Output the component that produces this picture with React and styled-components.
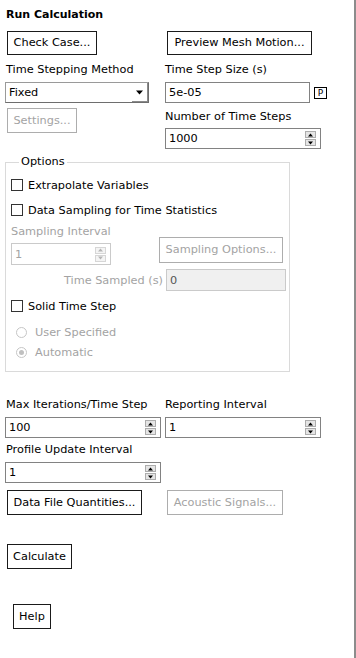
import React from 'react';
import styled, { createGlobalStyle } from 'styled-components';

const GlobalStyle = createGlobalStyle`
  html, body {
    margin: 0;
    padding: 0;
    background: #fff;
  }
  * {
    box-sizing: border-box;
  }
`;

const Panel = styled.div`
  width: 356px;
  height: 658px;
  border-right: 2px solid #8c8c8c;
  background: #fff;
  font-family: 'DejaVu Sans', Verdana, sans-serif;
  font-size: 11.3px;
  color: #000;
  display: flex;
  flex-direction: column;
  align-items: flex-start;
  overflow: hidden;
`;

const Title = styled.div`
  margin: 8px 0 0 6px;
  font-size: 11px;
  font-weight: bold;
  line-height: 14px;
`;

const Row = styled.div`
  display: grid;
  grid-template-columns: 165px 1fr;
  align-items: start;
  width: 100%;
  margin-top: ${({ $mt }) => $mt || 0}px;
`;

const Cell = styled.div`
  display: flex;
  flex-direction: column;
  align-items: flex-start;
`;

const Label = styled.div`
  line-height: 14px;
  white-space: nowrap;
  color: ${({ $disabled }) => ($disabled ? '#a3a3a3' : '#000')};
  margin-top: ${({ $mt }) => $mt || 0}px;
  margin-left: ${({ $ml }) => $ml || 0}px;
`;

const Button = styled.button`
  width: ${({ $w }) => $w}px;
  height: ${({ $h }) => $h || 25}px;
  margin-left: ${({ $ml }) => $ml || 0}px;
  margin-top: ${({ $mt }) => $mt || 0}px;
  padding: 0;
  background: #fff;
  border: 1px solid ${({ disabled }) => (disabled ? '#adadad' : '#1a1a1a')};
  color: ${({ disabled }) => (disabled ? '#a3a3a3' : '#000')};
  font: inherit;
  line-height: 14px;
  text-align: center;
  white-space: nowrap;
`;

const Select = styled.div`
  display: flex;
  align-items: stretch;
  width: ${({ $w }) => $w}px;
  height: 21px;
  margin-left: ${({ $ml }) => $ml || 0}px;
  border: 1px solid #9a9a9a;
  border-right-color: #6e6e6e;
  border-bottom-color: #6e6e6e;
  background: #fff;
`;

const SelectValue = styled.span`
  flex: 1;
  padding-left: 3px;
  line-height: 19px;
`;

const SelectArrow = styled.span`
  width: 16px;
  display: flex;
  align-items: center;
  justify-content: center;
  border-right: 1px solid #8a8a8a;
  border-bottom: 1px solid #8a8a8a;
`;

const InputRow = styled.div`
  display: flex;
  align-items: center;
  gap: ${({ $gap }) => $gap || 4}px;
  margin-left: ${({ $ml }) => $ml || 0}px;
  margin-top: ${({ $mt }) => $mt || 0}px;
`;

const TextBox = styled.div`
  width: ${({ $w }) => $w}px;
  height: ${({ $h }) => $h || 21}px;
  border: 1px solid ${({ $disabled }) => ($disabled ? '#cacaca' : '#828282')};
  background: ${({ $disabled }) => ($disabled ? '#f0f0f0' : '#fff')};
  color: ${({ $disabled }) => ($disabled ? '#555' : '#000')};
  padding-left: 3px;
  display: flex;
  align-items: center;
`;

const ParamBox = styled.span`
  width: 13px;
  height: 12px;
  border: 1px solid #000;
  font-size: 9px;
  line-height: 10px;
  text-align: center;
`;

const SpinBox = styled.div`
  display: flex;
  align-items: center;
  width: ${({ $w }) => $w}px;
  height: ${({ $h }) => $h || 21}px;
  margin-left: ${({ $ml }) => $ml || 0}px;
  margin-top: ${({ $mt }) => $mt || 0}px;
  padding: 0 4px 0 3px;
  border: 1px solid ${({ $disabled }) => ($disabled ? '#cacaca' : '#828282')};
  color: ${({ $disabled }) => ($disabled ? '#a3a3a3' : '#000')};
  background: #fff;
`;

const SpinValue = styled.span`
  flex: 1;
`;

const SpinButtons = styled.div`
  display: flex;
  flex-direction: column;
  gap: 1px;
  width: 11px;
`;

const SpinArrow = styled.span`
  height: 7px;
  display: flex;
  align-items: center;
  justify-content: center;
  background: ${({ $disabled }) => ($disabled ? '#f4f4f4' : '#e5e5e5')};
  border: 1px solid ${({ $disabled }) => ($disabled ? '#d6d6d6' : '#adadad')};
`;

const Group = styled.fieldset`
  width: 285px;
  margin: ${({ $mt }) => $mt || 0}px 0 0 5px;
  padding: 6px 0 9px 5px;
  border: 1px solid #dadada;
  min-width: 0;
`;

const Legend = styled.legend`
  margin-left: 8px;
  padding: 0 2px;
  line-height: 14px;
`;

const CheckRow = styled.label`
  display: flex;
  align-items: center;
  gap: 5px;
  height: 20px;
  margin-top: ${({ $mt }) => $mt || 0}px;
  white-space: nowrap;
`;

const CheckBox = styled.span`
  width: 12px;
  height: 12px;
  border: 1px solid #333;
  background: #fff;
`;

const RadioRow = styled.label`
  display: flex;
  align-items: center;
  gap: 8px;
  height: 20px;
  padding-left: 5px;
  margin-top: ${({ $mt }) => $mt || 0}px;
  color: #a3a3a3;
  white-space: nowrap;
`;

const RadioDot = styled.span`
  width: 11px;
  height: 11px;
  border-radius: 50%;
  border: 1px solid #c6c6c6;
  background: #fff;
  display: flex;
  align-items: center;
  justify-content: center;
  &::after {
    content: '';
    width: 5px;
    height: 5px;
    border-radius: 50%;
    background: ${({ $on }) => ($on ? '#c0c0c0' : 'transparent')};
  }
`;

const SamplingGrid = styled.div`
  display: grid;
  grid-template-columns: 148px 1fr;
  align-items: start;
`;

const SampledLabel = styled.span`
  width: 152px;
  text-align: right;
  color: #a3a3a3;
  white-space: nowrap;
`;

const Triangle = ({ down, size = 5, color = '#000' }) => (
  <svg width={size} height={Math.ceil(size / 2) + 1} viewBox="0 0 10 6">
    {down ? <polygon points="0,0 10,0 5,6" fill={color} /> : <polygon points="0,6 10,6 5,0" fill={color} />}
  </svg>
);

const Spin = ({ value, w, h, ml, mt, disabled }) => (
  <SpinBox $w={w} $h={h} $ml={ml} $mt={mt} $disabled={disabled}>
    <SpinValue>{value}</SpinValue>
    <SpinButtons>
      <SpinArrow $disabled={disabled}>
        <Triangle size={5} color={disabled ? '#b5b5b5' : '#000'} />
      </SpinArrow>
      <SpinArrow $disabled={disabled}>
        <Triangle down size={5} color={disabled ? '#b5b5b5' : '#000'} />
      </SpinArrow>
    </SpinButtons>
  </SpinBox>
);

export default function App() {
  return (
    <Panel>
      <GlobalStyle />
      <Title>Run Calculation</Title>

      <Row $mt={9}>
        <Cell>
          <Button $w={90} $h={24} $ml={7}>Check Case...</Button>
        </Cell>
        <Cell>
          <Button $w={145} $h={24} $ml={2}>Preview Mesh Motion...</Button>
        </Cell>
      </Row>

      <Row $mt={8}>
        <Label $ml={6}>Time Stepping Method</Label>
        <Label>Time Step Size (s)</Label>
      </Row>

      <Row $mt={5}>
        <Cell>
          <Select $w={144} $ml={5}>
            <SelectValue>Fixed</SelectValue>
            <SelectArrow>
              <Triangle down size={7} />
            </SelectArrow>
          </Select>
        </Cell>
        <Cell>
          <InputRow>
            <TextBox $w={145}>5e-05</TextBox>
            <ParamBox>P</ParamBox>
          </InputRow>
        </Cell>
      </Row>

      <Row $mt={5}>
        <Cell>
          <Button $w={70} $ml={7} disabled>Settings...</Button>
        </Cell>
        <Cell>
          <Label $mt={2}>Number of Time Steps</Label>
          <Spin value="1000" w={156} mt={4} />
        </Cell>
      </Row>

      <Group $mt={6}>
        <Legend>Options</Legend>
        <CheckRow>
          <CheckBox />
          Extrapolate Variables
        </CheckRow>
        <CheckRow $mt={5}>
          <CheckBox />
          Data Sampling for Time Statistics
        </CheckRow>
        <SamplingGrid>
          <Cell>
            <Label $disabled $mt={5}>Sampling Interval</Label>
            <Spin value="1" w={100} h={22} mt={4} disabled />
          </Cell>
          <Cell>
            <Button $w={124} $h={26} $mt={17} disabled>Sampling Options...</Button>
          </Cell>
        </SamplingGrid>
        <InputRow $gap={3} $mt={4}>
          <SampledLabel>Time Sampled (s)</SampledLabel>
          <TextBox $w={120} $h={22} $disabled>0</TextBox>
        </InputRow>
        <CheckRow $mt={5}>
          <CheckBox />
          Solid Time Step
        </CheckRow>
        <RadioRow $mt={6}>
          <RadioDot />
          User Specified
        </RadioRow>
        <RadioRow>
          <RadioDot $on />
          Automatic
        </RadioRow>
      </Group>

      <Row $mt={26}>
        <Label $ml={6}>Max Iterations/Time Step</Label>
        <Label>Reporting Interval</Label>
      </Row>

      <Row $mt={5}>
        <Spin value="100" w={156} ml={5} />
        <Spin value="1" w={156} />
      </Row>

      <Label $ml={6} $mt={5}>Profile Update Interval</Label>
      <Spin value="1" w={156} ml={5} mt={5} />

      <Row $mt={7}>
        <Cell>
          <Button $w={135} $ml={7}>Data File Quantities...</Button>
        </Cell>
        <Cell>
          <Button $w={116} $ml={2} disabled>Acoustic Signals...</Button>
        </Cell>
      </Row>

      <Button $w={65} $ml={7} $mt={29}>Calculate</Button>
      <Button $w={38} $ml={13} $mt={35}>Help</Button>
    </Panel>
  );
}
